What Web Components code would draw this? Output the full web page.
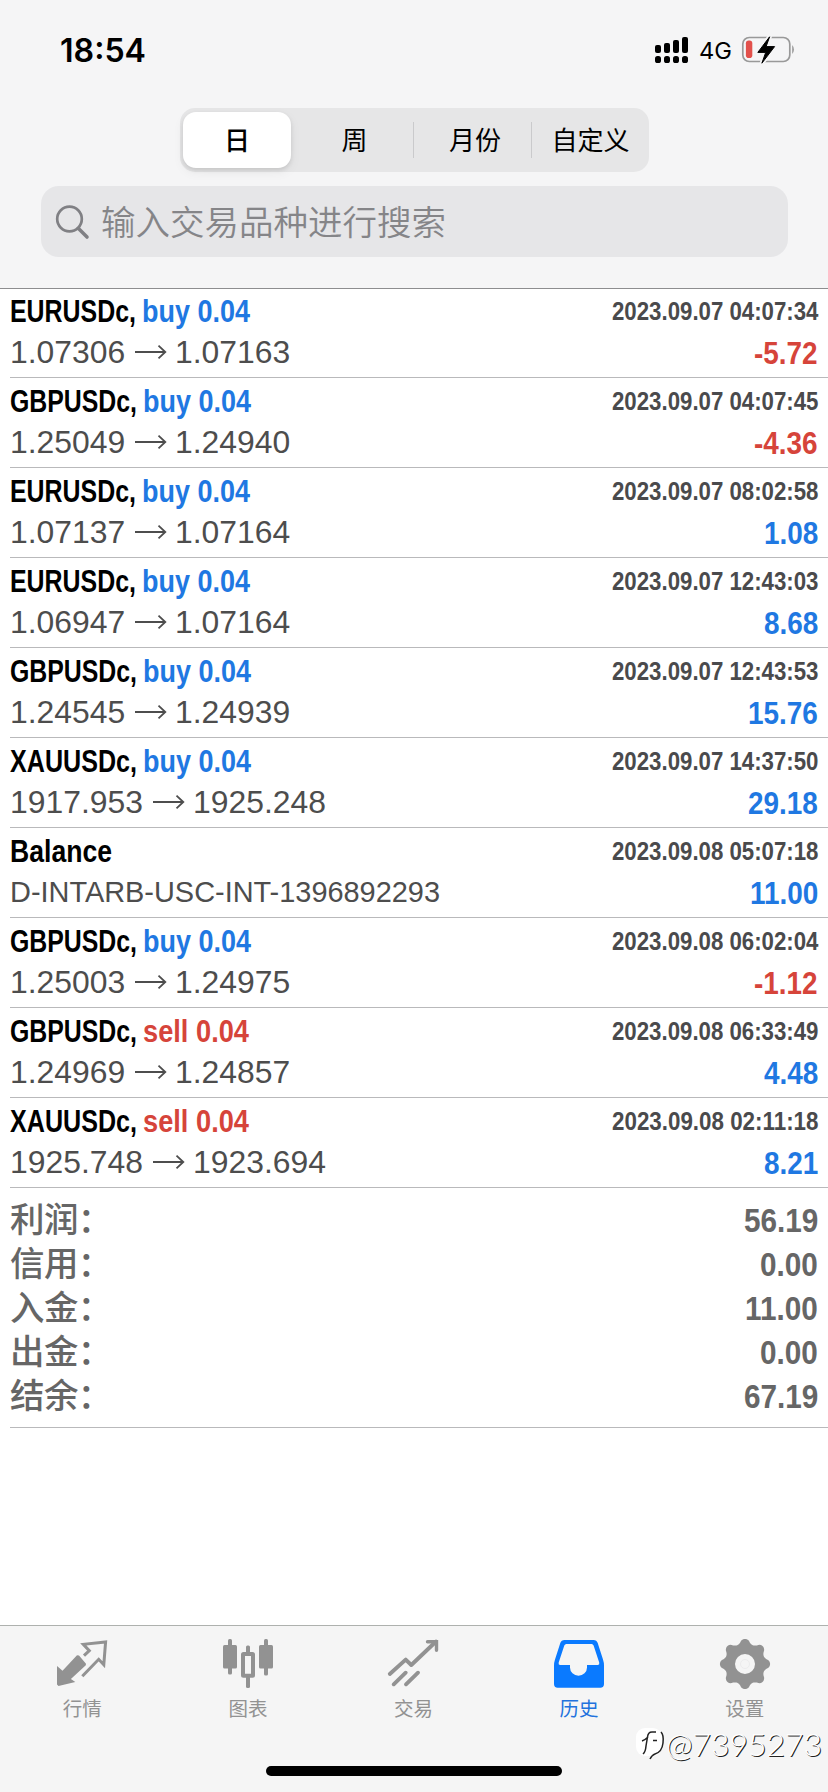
<!DOCTYPE html>
<html lang="zh-CN">
<head>
<meta charset="utf-8">
<title>历史</title>
<style>
html,body{margin:0;height:100%;background:#fff;overflow:hidden}
body{font-family:"Liberation Sans","Noto Sans CJK SC",sans-serif}
</style>
</head>
<body>
<history-app></history-app>
<script>
const define=(name,html,setup)=>customElements.define(name,class extends HTMLElement{
  connectedCallback(){
    if(this.shadowRoot)return;
    const root=this.attachShadow({mode:'open'});
    root.innerHTML=typeof html==='function'?html(this):html;
    if(setup)setup(this,root);
  }
});

/* One line of text condensed or widened to the given width. */
define('fit-text',`<style>
:host{display:inline-block;white-space:pre;flex:none}
span{display:inline-block;transform-origin:0 0}
</style><span><slot></slot></span>`,(el,root)=>{
  const s=root.querySelector('span');
  const natural=s.getBoundingClientRect().width;
  const k=el.hasAttribute('scale')?+el.getAttribute('scale'):+el.getAttribute('w')/natural;
  el.style.width=natural*k+'px';
  s.style.width=natural+'px';
  s.style.transform=`scaleX(${k})`;
});

define('status-bar',`<style>
:host{display:flex;height:100px;align-items:flex-start;justify-content:space-between;padding:0 33px 0 60px;color:#000;box-sizing:border-box}
.time{font:600 32px/40px Inter,sans-serif;margin-top:31px}
.right{display:flex;align-items:center;height:40px;margin-top:30px}
.net{font:400 23.5px/40px Inter,sans-serif;margin:1px 9px 0 10px}
svg{display:block}
</style>
<div class="time"><fit-text w="86">18:54</fit-text></div>
<div class="right">
<svg width="34" height="28" viewBox="0 0 34 28"><g><rect x="0" y="9" width="6" height="8" rx="2"/><rect x="9" y="7" width="6" height="10" rx="2"/><rect x="18" y="4" width="6" height="13" rx="2"/><rect x="27" y="1" width="6" height="16" rx="2"/><rect x="0" y="20" width="6" height="7" rx="2.6"/><rect x="9" y="20" width="6" height="7" rx="2.6"/><rect x="18" y="20" width="6" height="7" rx="2.6"/><rect x="27" y="20" width="6" height="7" rx="2.6"/></g></svg>
<fit-text class="net" w="33">4G</fit-text>
<svg width="54" height="30" viewBox="0 0 54 30"><rect x="1.8" y="2.500" width="47" height="24" rx="6.5" fill="none" stroke="#999" stroke-width="1.7"/><rect x="4.9" y="5.5" width="6.4" height="17.5" rx="2.8" fill="#e2504b"/><path d="M51.2 10q3.500 4.300 0 9z" fill="#999"/><path d="M28.6 1.8 16.8 17.400h7.900L20.900 28.200 33.600 11.600h-8.500z" stroke="#f5f5f6" stroke-width="4.5" stroke-linejoin="round"/><path d="M28.600 1.800 16.800 17.400h7.900L20.900 28.200 33.600 11.600h-8.500z" stroke="#000" stroke-width="1" stroke-linejoin="round"/></svg>
</div>`);

define('range-picker',`<style>
:host{display:grid;grid-template-columns:108px 123px 118px 114px;width:469px;height:64px;margin:8px auto 0 180px;padding:4px 3px;box-sizing:border-box;border-radius:15px;background:#e6e6e7;font:400 26px/54px "Noto Sans CJK SC",sans-serif;color:#000;text-align:center}
div{display:flex;justify-content:center;position:relative;height:56px}
.on{background:#fff;border-radius:13px;box-shadow:0 2px 4px rgba(0,0,0,.1),0 4px 12px rgba(0,0,0,.06);font-weight:500}
.sep{box-shadow:inset -1px 0 #cacacc;height:36px;margin-top:10px;line-height:34px;padding-left:4px}
.last{padding-left:3px}
</style><div class="on">日</div><div class="sep">周</div><div class="sep">月份</div><div class="last">自定义</div>`);

define('search-field',`<style>
:host{display:flex;align-items:center;width:747px;height:71px;margin:14px 0 0 41px;padding-left:14px;box-sizing:border-box;border-radius:18px;background:#e6e6e8;color:#858588;font:350 34.3px/71px "Noto Sans CJK SC",sans-serif}
svg{margin-right:11px;flex:none}
fit-text{margin-top:-3px}
</style><svg width="35" height="36" viewBox="0 0 35 36" fill="none" stroke="#808084"><circle cx="14.5" cy="15" r="12.3" stroke-width="2.7"/><path d="m23.500 24.500 8.500 8.500" stroke-width="3.600" stroke-linecap="round"/></svg><fit-text w="345">输入交易品种进行搜索</fit-text>`);

define('trade-row',el=>{
  const d=el.dataset, sell=d.side==='sell', neg=d.profit[0]==='-';
  const nameW={EURUSDc:126,GBPUSDc:127,XAUUSDc:127}[d.name];
  const title=d.side?`<fit-text w="${nameW}">${d.name},</fit-text><fit-text class="${sell?'neg':'pos'}" w="${sell?106:108}">${d.side} 0.04</fit-text>`:`<fit-text w="102">${d.name}</fit-text>`;
  const detail=d.from?`<fit-text scale="1.045">${d.from}</fit-text><svg width="32" height="16" viewBox="0 0 32 16" fill="none" stroke="#4d4d4d" stroke-width="1.8"><path d="M0 8h30M23.5 1.7 30.3 8l-6.800 6.300"/></svg><fit-text scale="1.045">${d.to}</fit-text>`:`<fit-text class="note" w="430">${d.note}</fit-text>`;
  return `<style>
:host{display:grid;grid-template:41px 41px/auto auto;justify-content:space-between;height:90px;padding:3px 10px 0;box-sizing:border-box;position:relative;line-height:41px}
:host::after{content:"";position:absolute;left:10px;right:0;bottom:0;height:1px;background:#b9b9bb}
.title{display:flex;gap:6px;font-weight:700;font-size:31.5px;color:#000}
.detail{display:flex;align-items:baseline;color:#4d4d4d;font-size:30.5px}
.detail svg{margin:0 8px 2px 10px;align-self:center}
.note{font-size:29px}
.date{font-weight:700;font-size:25px;color:#4a4a4c;text-align:right;line-height:41px}
.profit{font-weight:700;font-size:30.5px;text-align:right;line-height:43px}
.pos{color:#1f78e2}.neg{color:#d6443a}
</style>
<div class="title">${title}</div><div class="date"><fit-text w="206.500">${d.date}</fit-text></div>
<div class="detail">${detail}</div><div class="profit ${neg?'neg':'pos'}"><fit-text scale=".915">${d.profit}</fit-text></div>`;
});

define('summary-row',`<style>
:host{display:flex;justify-content:space-between;align-items:baseline;height:44px;color:#666;font:700 33px/44px "Liberation Sans",sans-serif}
.label{font:500 34.5px/44px "Noto Sans CJK SC",sans-serif;letter-spacing:-.6px}
</style><span class="label"><slot name="label"></slot></span><fit-text scale=".9"></fit-text>`,(el,root)=>{
  const n=document.createElement('fit-text');
  n.setAttribute('scale','.9');
  n.textContent=el.dataset.value;
  root.querySelector('fit-text').replaceWith(n);
});

const icons={
quotes:`<path d="m27 16.7 5.3-5-6-6.4L48.6 2.9 46.8 25.7 41.7 20.3 25.3 37.3" fill="none" stroke="currentColor" stroke-width="3"/><path d="M0 27l5.5 4.8L20 16.3l2 .2 7 8.3-.2 1.4L13.9 40l4.4 3L1.5 47 0 45.5z"/>`,
charts:`<rect y="6" width="14" height="23.5" rx="1.5"/><rect x="5" width="4" height="35.5" rx="1.5"/><rect x="36" y="6" width="14" height="23.5" rx="1.5"/><rect x="41" width="4" height="36.5" rx="1.5"/><rect x="20" y="15" width="10" height="21.7" rx=".5" fill="none" stroke="currentColor" stroke-width="4"/><rect x="23" y="6.5" width="4" height="8" rx="1.5"/><rect x="23" y="37" width="4" height="12" rx="1.5"/>`,
trade:`<path d="M1.8 35 17.7 20.6l5.6 5.4L48 2.5M5.7 45.3 17.7 33.7M18 45.3 30 33.7" fill="none" stroke="currentColor" stroke-width="3.9" stroke-linecap="round" stroke-linejoin="round"/><path d="M39.5 2.7h9v8.500" fill="none" stroke="currentColor" stroke-width="3.4" stroke-linecap="round"/>`,
history:`<path fill-rule="evenodd" d="M10.5 1h29q3.2 0 4.2 3L49 20.5q1 3 1 6V45q0 3.700-3.700 3.700H3.700Q0 48.700 0 45V26.500q0-3 1-6L6.300 4q1-3 4.200-3zM12.300 5q-1.500 0-2 1.500L4.700 23.600q-.600 2.400 1.200 2.400H16v2.500a8.500 8.200 0 0 0 17 0V26h11q1.800 0 1.200-2.400L39.600 6.500q-.5-1.500-2-1.500z"/>`,
settings:`<path fill-rule="evenodd" d="${gear()}M25 15a10 10 0 1 0 0 20 10 10 0 0 0 0-20z"/><circle cx="25" cy="25" r="4.500" fill="none" stroke="#ececed" stroke-width="1"/>`
};
function gear(){
  let p='';
  for(let i=0;i<144;i++){
    const a=i/144*Math.PI*2, c=Math.cos(8*a), r=22.700+2.400*Math.sign(c)*Math.pow(Math.abs(c),.75);
    p+=(i?'L':'M')+(25+r*Math.sin(a)).toFixed(2)+' '+(25-r*Math.cos(a)).toFixed(2);
  }
  return p+'z';
}

define('tab-item',el=>`<style>
:host{display:flex;flex-direction:column;align-items:center;flex:1;padding-top:13px;color:#929292;font:400 19.500px/28px "Noto Sans CJK SC",sans-serif}
:host([active]){color:#0a7aff}
:host([active]) span{color:#2272dd}
svg{display:block;overflow:visible}
span{margin-top:5px}
</style><svg width="50" height="50" fill="currentColor">${icons[el.dataset.icon]}</svg><span><slot></slot></span>`);

define('tab-bar',`<style>
:host{display:flex;flex-direction:column;height:167px;box-sizing:border-box;background:#f5f5f5;border-top:1px solid #aeb1ae;position:relative}
nav{display:flex;height:140px;margin:0 .5px 0 -.5px}
.home{width:296px;height:10px;border-radius:5px;background:#000;margin:0 0 0 266px;flex:none}
</style><nav><tab-item data-icon="quotes">行情</tab-item><tab-item data-icon="charts">图表</tab-item><tab-item data-icon="trade">交易</tab-item><tab-item data-icon="history" active>历史</tab-item><tab-item data-icon="settings">设置</tab-item></nav><div class="home"></div><slot></slot>`);

define('user-mark',`<style>
:host{position:absolute;right:6px;top:100px;display:flex;align-items:center;height:36px;color:#fff;font:300 32px/36px Lato,sans-serif;text-shadow:1px 1px .5px #222}
svg{margin-right:1px}
</style><svg width="29" height="34" viewBox="0 0 29 34" fill="none"><rect width="26" height="28" rx="9" y="1" fill="#fff"/><g stroke="#222" stroke-width="1.500"><path d="M20 5h-4q-4 0-4.500 5L10 19q-.5 6-3 8M6 14q3-1 6-4M17 13.500h4M25 5q3 3 2 11-1 9-8 11-3 1-5 5"/></g></svg><fit-text w="156">@7395273</fit-text>`);

const trades=[
['EURUSDc','buy','1.07306','1.07163','2023.09.07 04:07:34','-5.72'],
['GBPUSDc','buy','1.25049','1.24940','2023.09.07 04:07:45','-4.36'],
['EURUSDc','buy','1.07137','1.07164','2023.09.07 08:02:58','1.08'],
['EURUSDc','buy','1.06947','1.07164','2023.09.07 12:43:03','8.68'],
['GBPUSDc','buy','1.24545','1.24939','2023.09.07 12:43:53','15.76'],
['XAUUSDc','buy','1917.953','1925.248','2023.09.07 14:37:50','29.18'],
['Balance','','','','2023.09.08 05:07:18','11.00'],
['GBPUSDc','buy','1.25003','1.24975','2023.09.08 06:02:04','-1.12'],
['GBPUSDc','sell','1.24969','1.24857','2023.09.08 06:33:49','4.48'],
['XAUUSDc','sell','1925.748','1923.694','2023.09.08 02:11:18','8.21']];
const sums=[['利润','56.19'],['信用','0.00'],['入金','11.00'],['出金','0.00'],['结余','67.19']];

define('history-app',()=>`<style>
:host{display:flex;flex-direction:column;width:828px;height:1792px;background:#fff}
header{height:289px;box-sizing:border-box;background:#f5f5f6;border-bottom:1px solid #8d8d8f;margin-bottom:-1px;flex:none}
main{flex:1}
section{padding:7px 10px 0;height:240px;box-sizing:border-box;position:relative}
section::after{content:"";position:absolute;left:10px;right:0;bottom:0;height:1px;background:#b9b9bb}
</style>
<header><status-bar></status-bar><range-picker></range-picker><search-field></search-field></header>
<main>${trades.map(t=>`<trade-row data-name="${t[0]}" data-side="${t[1]}" data-from="${t[2]}" data-to="${t[3]}" data-date="${t[4]}" data-profit="${t[5]}" data-note="D-INTARB-USC-INT-1396892293"></trade-row>`).join('')}
<section>${sums.map(s=>`<summary-row data-value="${s[1]}"><span slot="label">${s[0]}：</span></summary-row>`).join('')}</section></main>
<tab-bar><user-mark></user-mark></tab-bar>`);
</script>
</body>
</html>
